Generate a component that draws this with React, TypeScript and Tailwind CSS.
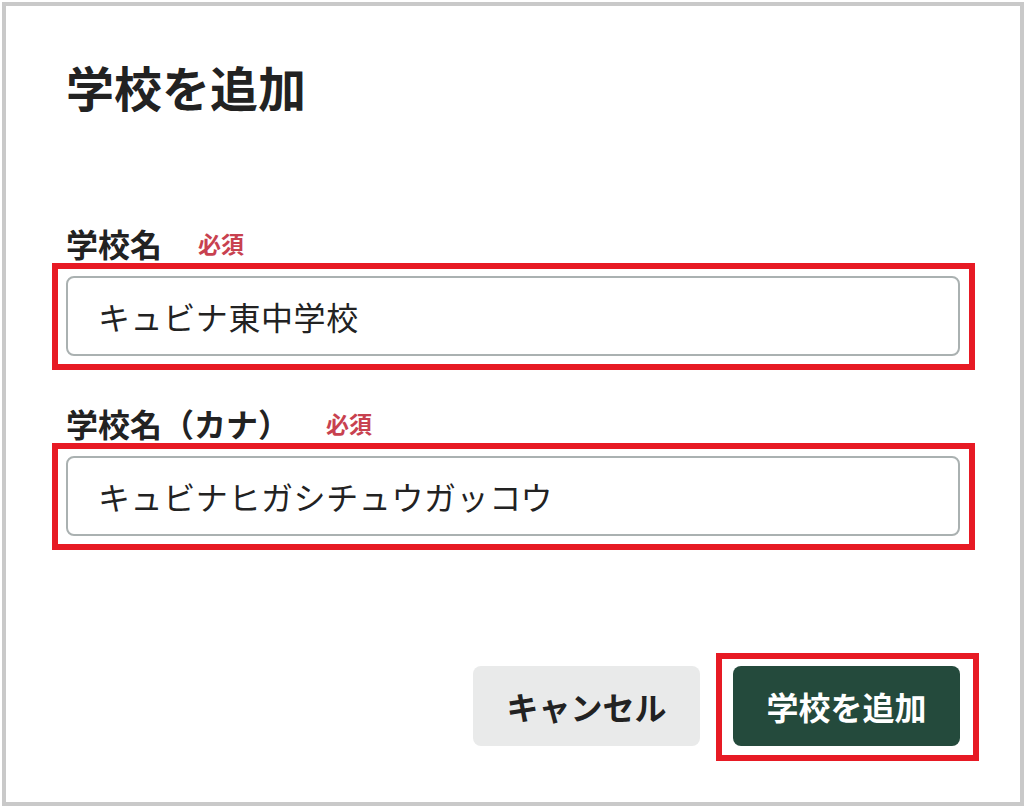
import React from "react";

const font = { fontFamily: '"Noto Sans CJK JP", "Noto Sans", sans-serif' };

function Mark({ className }: { className: string }) {
  return <span className={`pointer-events-none absolute border-[6px] border-[#e71a24] ${className}`} />;
}

function Field({ label, value }: { label: string; value: string }) {
  return (
    <div className="flex flex-col">
      <div className="flex items-center">
        <span className="text-[32px] font-bold leading-none text-[#222]">{label}</span>
        <span className="ml-9 text-[23px] font-bold leading-none text-[#c8414f]">必須</span>
      </div>
      <div className="relative mt-[17px]">
        <input
          readOnly
          defaultValue={value}
          className="block h-20 w-full rounded-lg border-2 border-[#aab1b1] bg-white px-[30px] text-[32px] leading-none tracking-[0.6px] text-[#222] outline-none"
          style={font}
        />
        <Mark className="-left-[14px] -right-[15px] -top-[13px] -bottom-[14px]" />
      </div>
    </div>
  );
}

export default function App() {
  return (
    <div className="h-[806px] w-[1024px] bg-white pl-[2px] pt-[2px]" style={font}>
      <div className="flex h-[804px] w-[1022px] flex-col border-4 border-[#c9c9c9] px-[60px] pt-[56px]">
        <h1 className="text-[48px] font-bold leading-none text-[#222]">学校を追加</h1>
        <div className="mt-[117px]">
          <Field label="学校名" value="キュビナ東中学校" />
        </div>
        <div className="mt-[51px]">
          <Field label="学校名（カナ）" value="キュビナヒガシチュウガッコウ" />
        </div>
        <div className="mt-[130px] flex justify-end gap-[33px]">
          <button className="h-20 w-[227px] rounded-lg bg-[#e9eaea] text-[32px] font-bold leading-none text-[#222]">
            キャンセル
          </button>
          <div className="relative">
            <button className="h-20 w-[227px] rounded-lg bg-[#244a3c] text-[32px] font-bold leading-none text-white">
              学校を追加
            </button>
            <Mark className="-left-[17px] -right-[19px] -top-[13px] -bottom-[15px]" />
          </div>
        </div>
      </div>
    </div>
  );
}
